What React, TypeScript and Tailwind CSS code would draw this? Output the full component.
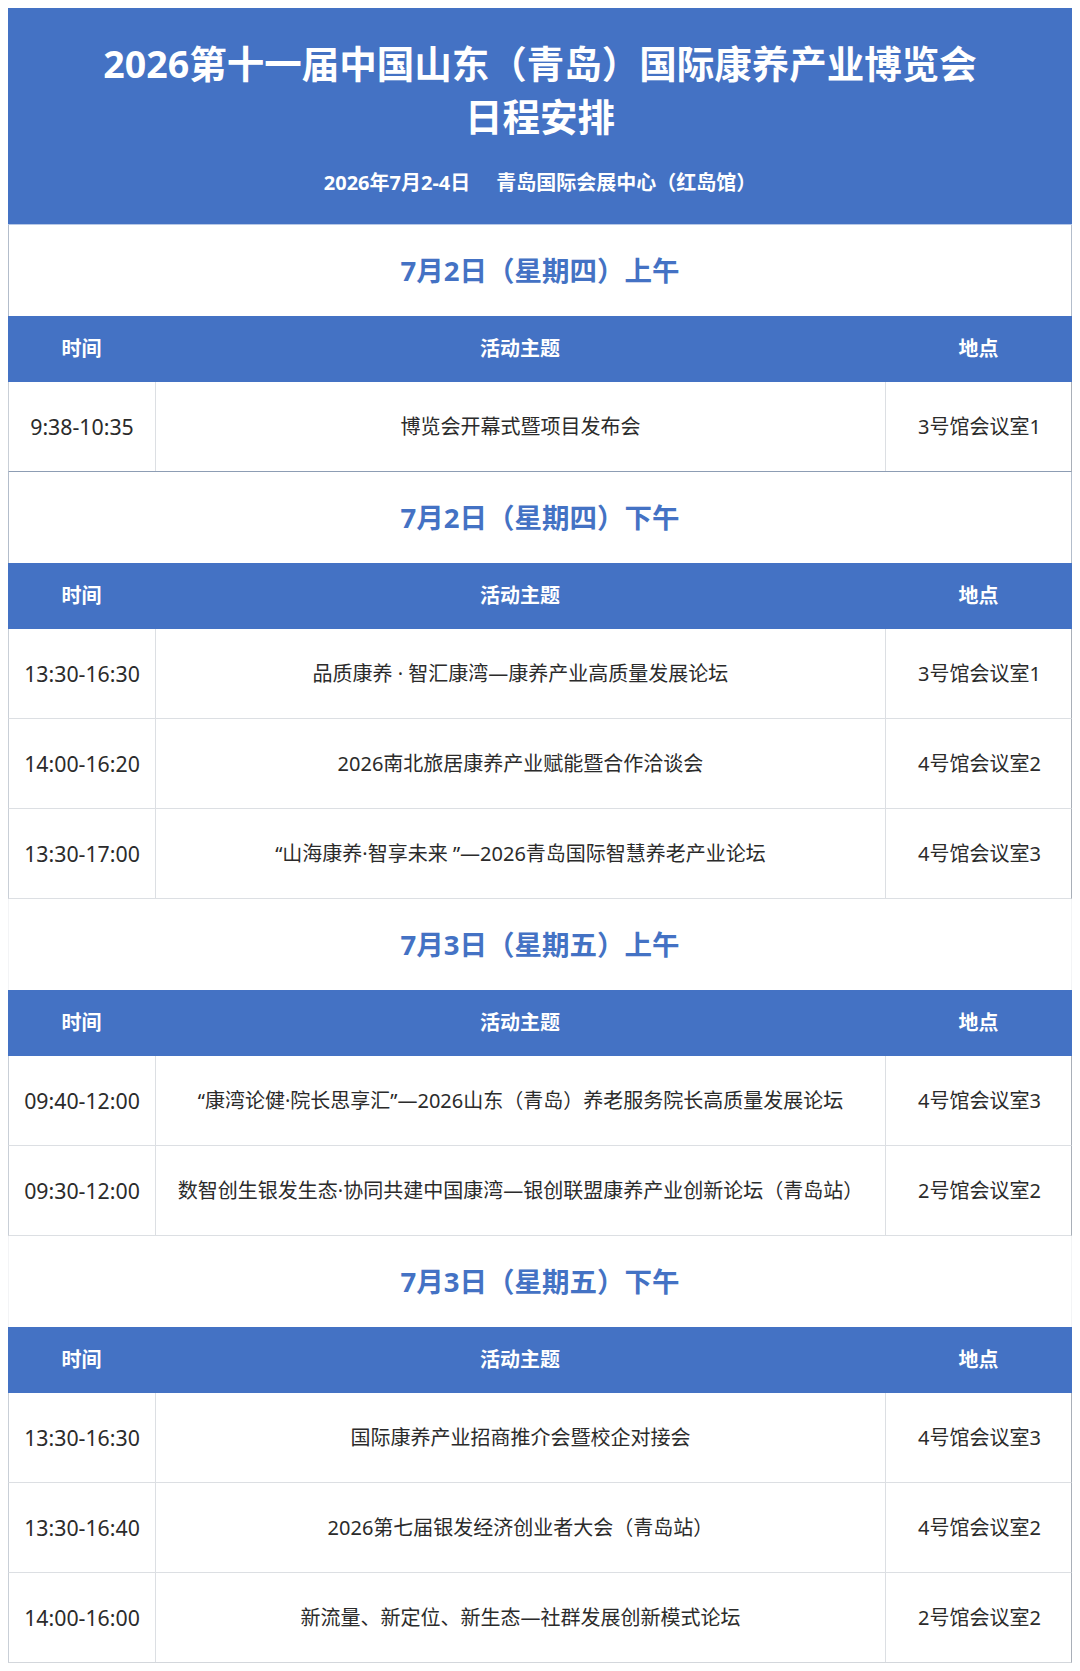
import React from 'react';

interface Item {
    time: string;
    topic: string;
    place: string;
}

interface Day {
    title: string;
    items: Item[];
    sideBorder: string;
    bottomBorder: string;
}

const days: Day[] = [
    {
        title: '7月2日（星期四）上午',
        sideBorder: 'border-[#b3bdcb]',
        bottomBorder: 'border-b-[#8d9db4]',
        items: [{ time: '9:38-10:35', topic: '博览会开幕式暨项目发布会', place: '3号馆会议室1' }],
    },
    {
        title: '7月2日（星期四）下午',
        sideBorder: 'border-[#b3bdcb]',
        bottomBorder: 'border-b-[#dcdfe3]',
        items: [
            { time: '13:30-16:30', topic: '品质康养 · 智汇康湾—康养产业高质量发展论坛', place: '3号馆会议室1' },
            { time: '14:00-16:20', topic: '2026南北旅居康养产业赋能暨合作洽谈会', place: '4号馆会议室2' },
            { time: '13:30-17:00', topic: '“山海康养·智享未来 ”—2026青岛国际智慧养老产业论坛', place: '4号馆会议室3' },
        ],
    },
    {
        title: '7月3日（星期五）上午',
        sideBorder: 'border-[#f3f4f6]',
        bottomBorder: 'border-b-[#dcdfe3]',
        items: [
            { time: '09:40-12:00', topic: '“康湾论健·院长思享汇”—2026山东（青岛）养老服务院长高质量发展论坛', place: '4号馆会议室3' },
            { time: '09:30-12:00', topic: '数智创生银发生态·协同共建中国康湾—银创联盟康养产业创新论坛（青岛站）', place: '2号馆会议室2' },
        ],
    },
    {
        title: '7月3日（星期五）下午',
        sideBorder: 'border-[#f3f4f6]',
        bottomBorder: 'border-b-[#d3d7dc]',
        items: [
            { time: '13:30-16:30', topic: '国际康养产业招商推介会暨校企对接会', place: '4号馆会议室3' },
            { time: '13:30-16:40', topic: '2026第七届银发经济创业者大会（青岛站）', place: '4号馆会议室2' },
            { time: '14:00-16:00', topic: '新流量、新定位、新生态—社群发展创新模式论坛', place: '2号馆会议室2' },
        ],
    },
];

const cols = 'grid grid-cols-[147px_730px_187px]';

const DayBlock: React.FC<{ day: Day }> = ({ day }) => (
    <div>
        {/* Day title */}
        <div className={`h-[91px] flex items-center justify-center border-x ${day.sideBorder} bg-white`}>
            <span className="text-[27.5px] font-bold text-[#4472c4] leading-none">{day.title}</span>
        </div>

        {/* Column headings */}
        <div className={`${cols} h-[66px] bg-[#4472c4] text-white text-[20px] font-bold`}>
            <div className="flex items-center justify-center">时间</div>
            <div className="flex items-center justify-center">活动主题</div>
            <div className="flex items-center justify-center">地点</div>
        </div>

        {/* Rows */}
        {day.items.map((item, i) => {
            const last = i === day.items.length - 1;
            return (
                <div
                    key={i}
                    className={`${cols} h-[90px] border-x border-l-[#c9cfd7] border-r-[#a9afb8] border-b text-[20px] text-[#2b2b2b] ${
                        last ? day.bottomBorder : 'border-b-[#dcdfe3]'
                    }`}
                >
                    <div className="flex items-center justify-center border-r border-[#dcdfe3] whitespace-nowrap text-[21.3px]">
                        {item.time}
                    </div>
                    <div className="flex items-center justify-center border-r border-[#dcdfe3] whitespace-nowrap">{item.topic}</div>
                    <div className="flex items-center justify-center whitespace-nowrap">{item.place}</div>
                </div>
            );
        })}
    </div>
);

export default function App() {
    return (
        <div className="w-[1080px] min-h-[1671px] bg-white px-[8px] pt-[8px] font-['Noto_Sans','Noto_Sans_CJK_SC',sans-serif]">
            {/* Banner */}
            <div className="h-[217px] bg-[#4472c4] text-white flex flex-col items-center pt-[29px] border-b border-[#b7c8e6]">
                <h1 className="text-[37.5px] font-bold leading-[53px] text-center whitespace-nowrap">
                    2026第十一届中国山东（青岛）国际康养产业博览会
                </h1>
                <h1 className="text-[37.5px] font-bold leading-[53px] text-center">日程安排</h1>
                <p className="mt-[26px] text-[20px] font-bold leading-[28px] whitespace-nowrap">
                    2026年7月2-4日<span className="ml-[26px]">青岛国际会展中心（红岛馆）</span>
                </p>
            </div>

            {days.map((day, i) => (
                <DayBlock key={i} day={day} />
            ))}
        </div>
    );
}
